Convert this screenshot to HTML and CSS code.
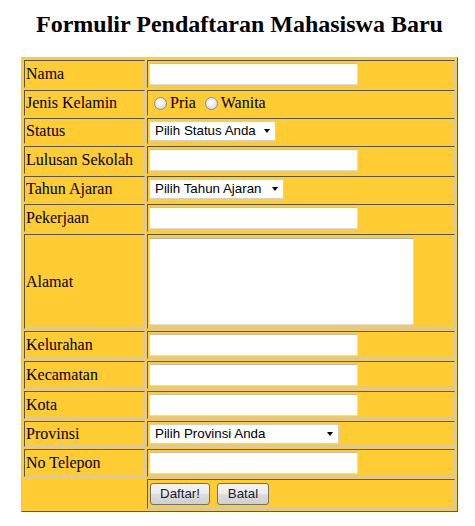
FILE: index.html
```html
<!DOCTYPE html>
<html>
<head>
<meta charset="utf-8">
<title>Formulir Pendaftaran Mahasiswa Baru</title>
<link rel="stylesheet" href="styles.css">
</head>
<body>
<div class="page">
  <h2 class="title">Formulir Pendaftaran Mahasiswa Baru</h2>
  <table class="form">
    <tr>
      <td class="label">Nama</td>
      <td class="value"><input type="text" class="text"></td>
    </tr>
    <tr>
      <td class="label">Jenis Kelamin</td>
      <td class="value">
        <div class="radios">
          <label class="opt"><input type="radio" name="jk" class="radio">Pria</label>
          <label class="opt"><input type="radio" name="jk" class="radio">Wanita</label>
        </div>
      </td>
    </tr>
    <tr>
      <td class="label">Status</td>
      <td class="value"><span class="sel"><select class="select w-status"><option>Pilih Status Anda</option></select></span></td>
    </tr>
    <tr>
      <td class="label">Lulusan Sekolah</td>
      <td class="value"><input type="text" class="text"></td>
    </tr>
    <tr>
      <td class="label">Tahun Ajaran</td>
      <td class="value"><span class="sel"><select class="select w-tahun"><option>Pilih Tahun Ajaran</option></select></span></td>
    </tr>
    <tr>
      <td class="label">Pekerjaan</td>
      <td class="value"><input type="text" class="text"></td>
    </tr>
    <tr>
      <td class="label">Alamat</td>
      <td class="value"><textarea class="area"></textarea></td>
    </tr>
    <tr>
      <td class="label">Kelurahan</td>
      <td class="value"><input type="text" class="text"></td>
    </tr>
    <tr>
      <td class="label">Kecamatan</td>
      <td class="value"><input type="text" class="text"></td>
    </tr>
    <tr>
      <td class="label">Kota</td>
      <td class="value"><input type="text" class="text"></td>
    </tr>
    <tr>
      <td class="label">Provinsi</td>
      <td class="value"><span class="sel"><select class="select w-prov"><option>Pilih Provinsi Anda</option></select></span></td>
    </tr>
    <tr>
      <td class="label">No Telepon</td>
      <td class="value"><input type="text" class="text"></td>
    </tr>
    <tr>
      <td class="label empty"></td>
      <td class="value">
        <div class="buttons">
          <button type="submit" class="btn w-daftar">Daftar!</button>
          <button type="reset" class="btn w-batal">Batal</button>
        </div>
      </td>
    </tr>
  </table>
</div>
</body>
</html>
```

FILE: styles.css
```css
html, body {
  margin: 0;
  padding: 0;
  background: #ffffff;
}

body {
  font-family: "Liberation Serif", "Times New Roman", serif;
  font-size: 16px;
  color: #000;
}

.page {
  width: 437px;
  margin-left: 21px;
  padding-top: 10px;
}

.title {
  margin: 0 0 19px 0;
  font-size: 24px;
  line-height: 28px;
  font-weight: bold;
  text-align: center;
  white-space: nowrap;
}

.form {
  width: 437px;
  border-collapse: separate;
  border-spacing: 2px;
  background: #ffcc33;
  border: 1px solid;
  border-color: #c8c8c8 #555555 #555555 #c8c8c8;
}

.form td {
  padding: 1px;
  border: 1px solid;
  border-color: #555555 #c8c8c8 #c8c8c8 #555555;
  vertical-align: middle;
}

.form td.label {
  width: 117px;
  white-space: nowrap;
  line-height: 18px;
}

.form td.empty {
  border-color: transparent;
}

.text {
  display: block;
  box-sizing: border-box;
  width: 209px;
  height: 22px;
  margin: 1px 0;
  padding: 0 2px;
  border: 1px solid #d9dde3;
  border-top-color: #b9bec7;
  border-radius: 2px;
  background: #fff;
  font-family: "Liberation Sans", Arial, sans-serif;
  font-size: 13px;
  outline: none;
}

.radios {
  height: 22px;
  display: flex;
  align-items: center;
}

.opt {
  display: flex;
  align-items: center;
  margin-right: 4px;
  line-height: 18px;
}

.radio {
  -webkit-appearance: none;
  appearance: none;
  width: 13px;
  height: 13px;
  margin: 0 3px 0 5px;
  border: 1px solid #8f9090;
  border-radius: 50%;
  background: radial-gradient(circle at 45% 40%, #ffffff 0%, #f0f0f0 35%, #c8c8c8 100%);
  box-sizing: border-box;
}

.sel {
  position: relative;
  display: block;
  width: max-content;
  margin: 1px 0;
}

.sel::after {
  content: "";
  position: absolute;
  right: 6px;
  top: 8px;
  width: 0;
  height: 0;
  border-left: 3.5px solid transparent;
  border-right: 3.5px solid transparent;
  border-top: 4px solid #000;
  pointer-events: none;
}

.select {
  -webkit-appearance: none;
  appearance: none;
  display: block;
  box-sizing: border-box;
  height: 20px;
  margin: 0;
  padding: 0 0 0 5px;
  border: 1px solid #d0d0d0;
  border-radius: 2px;
  background: #fff;
  color: #000;
  font-family: "Liberation Sans", Arial, sans-serif;
  font-size: 13.33px;
  line-height: 18px;
  outline: none;
}

.w-status { width: 127px; }
.w-tahun { width: 135px; }
.w-prov { width: 190px; }

.area {
  display: block;
  box-sizing: border-box;
  width: 265px;
  height: 87px;
  margin: 2px 0;
  padding: 2px;
  border: 1px solid #d9dde3;
  border-top-color: #a9aeb8;
  border-radius: 2px;
  background: #fff;
  resize: none;
  outline: none;
}

.buttons {
  display: flex;
  gap: 7px;
  margin: 2px 0 2px 1px;
}

.btn {
  box-sizing: border-box;
  height: 22px;
  padding: 0;
  border: 1px solid #707070;
  border-radius: 3px;
  background: linear-gradient(#f3f3f3 0%, #ebebeb 50%, #dddddd 50%, #cfcfcf 100%);
  color: #1a1a2e;
  font-family: "Liberation Sans", Arial, sans-serif;
  font-size: 13.33px;
  line-height: 20px;
  text-align: center;
}

.w-daftar { width: 60px; }
.w-batal { width: 52px; }
```
